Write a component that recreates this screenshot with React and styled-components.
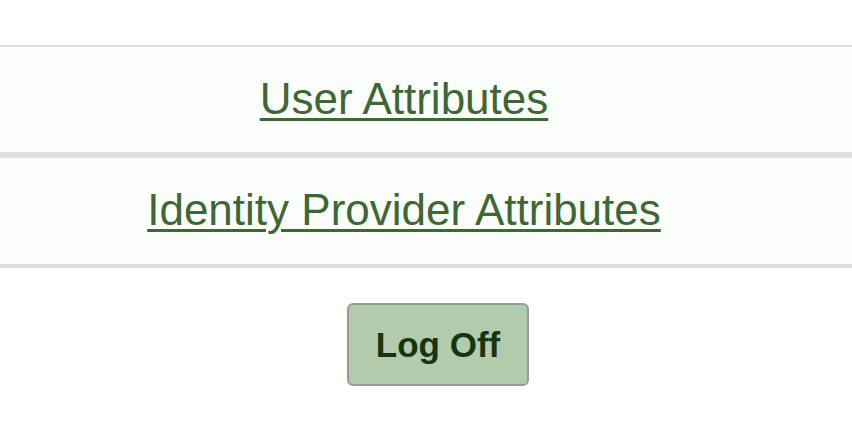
import React from "react";
import styled, { createGlobalStyle } from "styled-components";

const GlobalStyle = createGlobalStyle`
  html, body {
    margin: 0;
    padding: 0;
    background: #ffffff;
    font-family: "Liberation Sans", Arial, Helvetica, sans-serif;
  }
`;

const Page = styled.div`
  padding-top: 45px;
  display: flex;
  flex-direction: column;
`;

const LinkList = styled.ul`
  list-style: none;
  margin: 0;
  padding: 0;
  display: flex;
  flex-direction: column;
`;

const LinkRow = styled.li`
  height: ${(props) => props.h}px;
  background: #fbfdfb;
  border-top: ${(props) => props.top}px solid #dfdfdf;
  border-bottom: ${(props) => props.bottom}px solid #dfdfdf;
  display: flex;
  align-items: center;
  justify-content: center;
  padding-right: 44px;
`;

const AttrLink = styled.a`
  font-size: 44px;
  line-height: 50px;
  color: #3d6834;
  text-decoration: underline;
  text-decoration-thickness: 3px;
  text-underline-offset: 4px;
  margin-top: ${(props) => props.shift || 0}px;
`;

const Actions = styled.div`
  display: flex;
  justify-content: center;
  padding: 35px 0 0 24px;
`;

const LogOffButton = styled.button`
  width: 182px;
  height: 83px;
  background: #b1cbac;
  border: 2px solid #9a9a9a;
  border-radius: 6px;
  font-family: "Liberation Sans", Arial, Helvetica, sans-serif;
  font-weight: 700;
  font-size: 35px;
  color: #163510;
  cursor: pointer;
`;

export default function App() {
  return (
    <>
      <GlobalStyle />
      <Page>
        <LinkList>
          <LinkRow h={105} top={2} bottom={3}>
            <AttrLink href="#" shift={-2}>User Attributes</AttrLink>
          </LinkRow>
          <LinkRow h={106} top={3} bottom={4}>
            <AttrLink href="#" shift={-2}>Identity Provider Attributes</AttrLink>
          </LinkRow>
        </LinkList>
        <Actions>
          <LogOffButton>Log Off</LogOffButton>
        </Actions>
      </Page>
    </>
  );
}
